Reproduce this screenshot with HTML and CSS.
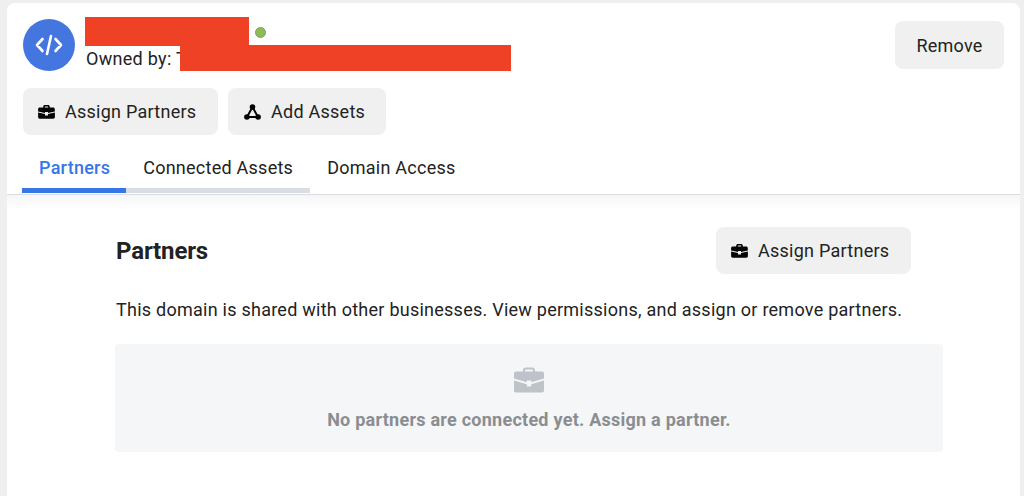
FILE: index.html
```html
<!DOCTYPE html>
<html lang="en">
<head>
<meta charset="utf-8">
<title>Domain partners</title>
<link rel="stylesheet" href="styles.css">
</head>
<body>
<main class="card">
  <header class="top">
    <div class="identity-row">
      <div class="identity">
        <div class="avatar">
          <svg viewBox="0 0 28 22" width="28" height="22" fill="none" stroke="#fff" stroke-width="2.600" stroke-linecap="round" stroke-linejoin="round"><path d="M7.500 5 2 11l5.500 6M20.500 5 26 11l-5.500 6M16 2 12 20"/></svg>
        </div>
        <div class="names">
          <div class="name-line"><span class="status-dot"></span></div>
          <div class="owner">Owned by: T</div>
          <span class="redact redact-name"></span>
          <span class="redact redact-owner"></span>
        </div>
      </div>
      <button class="btn btn-remove">Remove</button>
    </div>
    <div class="actions">
      <button class="btn btn-assign">
        <svg class="icon" viewBox="0 0 17 14" width="17" height="14"><path fill="#050505" d="M5.200 2.600V1.700C5.200.8 6 .1 6.900.1h3.200c.9 0 1.700.7 1.700 1.600v.9h3.400c.9 0 1.600.7 1.600 1.500V6.500L10 8V7.100H7V8L.1 6.500V4.100c0-.8.7-1.500 1.600-1.500zM6.800 2.600h3.400v-.7c0-.2-.1-.3-.3-.3H7.100c-.2 0-.3.1-.3.300zM.1 7.500 7 9V10.400h3V9l6.900-1.500v4.600c0 .9-.7 1.600-1.600 1.600H1.700c-.9 0-1.600-.7-1.600-1.600z"/></svg>
        Assign Partners
      </button>
      <button class="btn btn-add">
        <svg class="icon" viewBox="0 0 17 16" width="17" height="16"><path fill="none" stroke="#050505" stroke-width="2" d="M8.500 3 3 13h11z"/><circle cx="8.500" cy="3" r="2.800" fill="#050505"/><circle cx="2.900" cy="13" r="2.800" fill="#050505"/><circle cx="14.100" cy="13" r="2.800" fill="#050505"/></svg>
        Add Assets
      </button>
    </div>
    <nav class="tabs">
      <a class="tab tab-active">Partners</a>
      <a class="tab tab-muted">Connected Assets</a>
      <a class="tab tab-plain">Domain Access</a>
    </nav>
  </header>
  <section class="content">
    <div class="content-head">
      <h2>Partners</h2>
      <button class="btn btn-assign">
        <svg class="icon" viewBox="0 0 17 14" width="17" height="14"><path fill="#050505" d="M5.200 2.600V1.700C5.200.8 6 .1 6.900.1h3.200c.9 0 1.700.7 1.700 1.600v.9h3.400c.9 0 1.600.7 1.600 1.500V6.500L10 8V7.100H7V8L.1 6.500V4.100c0-.8.7-1.500 1.600-1.500zM6.800 2.600h3.400v-.7c0-.2-.1-.3-.3-.3H7.100c-.2 0-.3.1-.3.300zM.1 7.500 7 9V10.400h3V9l6.900-1.500v4.600c0 .9-.7 1.600-1.600 1.600H1.700c-.9 0-1.600-.7-1.600-1.600z"/></svg>
        Assign Partners
      </button>
    </div>
    <p class="desc">This domain is shared with other businesses. View permissions, and assign or remove partners.</p>
    <div class="empty">
      <svg viewBox="0 0 32 26" width="32" height="26"><path fill="#bec3c9" d="M10 4.500V3.200C10 1.500 11.400.6 12.700.6h6.600c1.300 0 2.700.9 2.700 2.600v1.300h7c1.200 0 2 .8 2 2V11.500L18.200 15.200V13.500h-4.400v1.700L1 11.500V6.500c0-1.200.8-2 2-2zM12 4.500h8V3.400c0-.5-.3-.8-.8-.8h-6.400c-.5 0-.8.3-.8.800zM1 13.500l12.800 3.700v2.300h4.400v-2.300L31 13.500v10c0 1.200-.8 2-2 2H3c-1.200 0-2-.8-2-2z"/></svg>
      <p>No partners are connected yet. Assign a partner.</p>
    </div>
  </section>
</main>
</body>
</html>
```
FILE: styles.css
```css
* { box-sizing: border-box; }
html, body { height: 100%; }
body {
  margin: 0;
  padding: 3px 4px 0 7px;
  background: #efefef;
  overflow: hidden;
  font-family: Roboto, "Liberation Sans", sans-serif;
  color: #1c1e21;
}
.card {
  height: 100%;
  background: #fff;
  border-radius: 8px 8px 0 0;
  overflow: hidden;
}
.top {
  padding: 16px 16px 1px;
  border-bottom: 1px solid #dadde1;
}
.identity-row {
  display: flex;
  justify-content: space-between;
  align-items: flex-start;
}
.identity {
  display: flex;
  gap: 11px;
}
.avatar {
  width: 52px;
  height: 52px;
  border-radius: 50%;
  background: #4476e0;
  display: flex;
  align-items: center;
  justify-content: center;
}
.names {
  position: relative;
  width: 430px;
}
.name-line {
  height: 27px;
  padding: 8px 0 0 169px;
}
.status-dot {
  display: block;
  width: 11px;
  height: 11px;
  border-radius: 50%;
  background: #8dbb57;
  border: 1px solid #7fa84d;
}
.owner {
  font-size: 18px;
  line-height: 25px;
  letter-spacing: 0.3px;
  color: #222;
}
.redact {
  position: absolute;
  background: #ee4125;
}
.redact-name { left: -1px; top: -2px; width: 164px; height: 29px; }
.redact-owner { left: 94px; top: 26px; width: 331px; height: 26px; }
.btn {
  display: inline-flex;
  align-items: center;
  gap: 10px;
  height: 47px;
  padding: 0 0 0 15px;
  border: 0;
  border-radius: 8px;
  background: #f0f0f0;
  color: #222;
  font: 400 18px Roboto, "Liberation Sans", sans-serif;
  letter-spacing: 0.25px;
}
.btn-remove {
  width: 109px;
  height: 48px;
  margin-top: 2px;
  padding: 0;
  justify-content: center;
}
.btn-assign { width: 195px; }
.btn-add { width: 158px; padding-left: 16px; }
.actions {
  display: flex;
  gap: 10px;
  margin-top: 17px;
}
.tabs {
  display: flex;
  margin: 6px 0 0 -1px;
}
.tab {
  padding: 14px 17px 0;
  height: 52px;
  font-size: 18px;
  line-height: 25px;
  letter-spacing: 0.25px;
  color: #222;
  border-bottom: 5px solid transparent;
}
.tab-active {
  padding-right: 16px;
  color: #3578e5;
  font-weight: 500;
  border-bottom-color: #3578e5;
}
.tab-muted { border-bottom-color: #dadde1; }
.content {
  height: 100%;
  padding: 32px 77px 0 108px;
  background: linear-gradient(#f6f6f6, #fff 14px);
}
.content-head {
  display: flex;
  justify-content: space-between;
  align-items: center;
  padding-right: 32px;
}
h2 {
  margin: 0 0 0 1px;
  font-size: 24px;
  font-weight: 700;
  letter-spacing: -0.15px;
  color: #222;
}
.desc {
  margin: 23px 0 0 1px;
  font-size: 18px;
  line-height: 26px;
  letter-spacing: 0.25px;
  color: #222;
}
.empty {
  height: 108px;
  margin-top: 21px;
  border-radius: 4px;
  background: #f5f6f7;
  display: flex;
  flex-direction: column;
  align-items: center;
  padding-top: 23px;
}
.empty p {
  margin: 16px 0 0;
  font-size: 18px;
  line-height: 22px;
  font-weight: 700;
  letter-spacing: 0.25px;
  color: #8a8d91;
}
```
